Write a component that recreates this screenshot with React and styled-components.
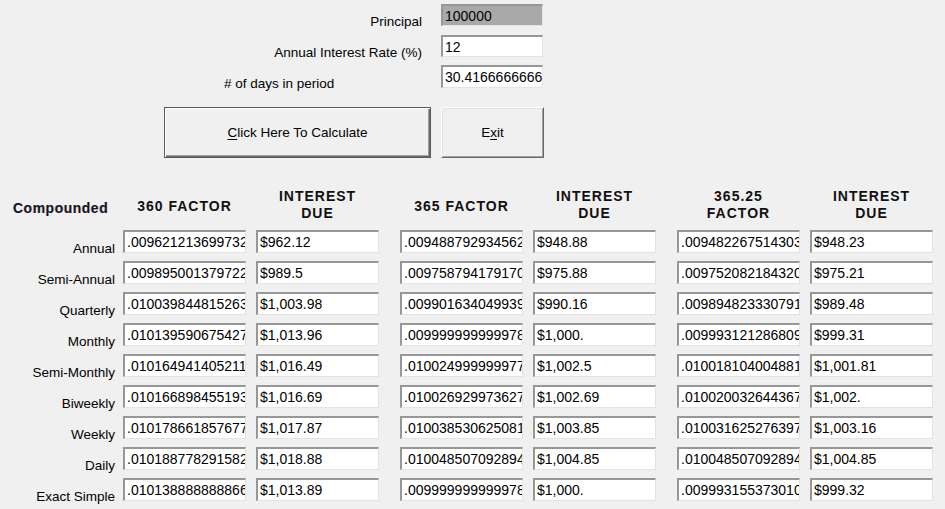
import React from 'react'
import styled, { createGlobalStyle } from 'styled-components'

const Global = createGlobalStyle`
  html, body {
    margin: 0;
    padding: 0;
    background: #f0f0f0;
  }
  * {
    box-sizing: border-box;
  }
`

const Form = styled.div`
  width: 945px;
  height: 509px;
  background: #f0f0f0;
  font-family: "Liberation Sans", Arial, sans-serif;
  color: #000;
  padding-top: 4px;
  overflow: hidden;
`

const Inputs = styled.div`
  display: grid;
  grid-template-columns: 202px 102px;
  grid-template-rows: 22px 22px 23px;
  column-gap: 19px;
  row-gap: 8.5px;
  padding-left: 220px;
`

const TopLabel = styled.div`
  font-size: 13.5px;
  line-height: 15px;
  align-self: end;
  margin-bottom: -3px;
  padding-left: ${p => (p.left ? 4 : 0)}px;
  text-align: ${p => (p.left ? 'left' : 'right')};
  white-space: nowrap;
`

const Field = styled.div`
  width: ${p => p.w || 123}px;
  height: ${p => p.h || 23}px;
  background: ${p => (p.disabled ? '#a9a9a9' : '#fff')};
  border-style: solid;
  border-width: 2px 1px 1px 2px;
  border-color: #979797 #e3e3e3 #e3e3e3 #979797;
  font-size: 14px;
  line-height: 18px;
  padding: 1px 0 0 2px;
  white-space: nowrap;
  overflow: hidden;
  justify-self: start;
`

const Buttons = styled.div`
  display: flex;
  gap: 10px;
  padding-left: 164px;
  margin-top: 19px;
`

const Button = styled.div`
  width: ${p => p.w}px;
  height: 51px;
  background: #f0f0f0;
  display: flex;
  align-items: center;
  justify-content: center;
  font-size: 13.5px;
  border: 1px solid;
  border-color: ${p => (p.primary ? '#5a5a5a' : '#ffffff #696969 #696969 #ffffff')};
  box-shadow: ${p =>
    p.primary
      ? 'inset 1px 1px 0 #ffffff, inset -1px -1px 0 #696969, inset -2px -2px 0 #a0a0a0'
      : 'inset 1px 1px 0 #e3e3e3, inset -1px -1px 0 #a0a0a0'};

  u {
    text-decoration: underline;
    text-underline-offset: 2px;
  }
`

const Table = styled.div`
  display: grid;
  grid-template-columns: 123px 133px 144px 133px 144px 133px 123px;
  grid-template-rows: 34px;
  grid-auto-rows: 23px;
  row-gap: 8px;
  margin-top: 30px;
`

const HeadRow = styled.div`
  display: contents;
`

const Compounded = styled.div`
  align-self: center;
  padding-left: 13px;
  padding-top: 6px;
  font-size: 14px;
  font-weight: 700;
  color: #0d1634;
  letter-spacing: 0.5px;
  text-shadow: -0.6px 0 0 rgba(210, 130, 40, 0.55);
  white-space: nowrap;
`

const Head = styled.div`
  width: 123px;
  align-self: center;
  text-align: center;
  font-size: 14px;
  line-height: 17px;
  font-weight: 700;
  letter-spacing: 1px;
  color: #111;
  padding-top: ${p => (p.single ? 3 : 0)}px;
`

const RowLabel = styled.div`
  align-self: end;
  margin-bottom: -4px;
  padding-right: 8px;
  text-align: right;
  font-size: 13.5px;
  line-height: 16px;
  white-space: nowrap;
`

const rows = [
  ['Annual', '.009621213699732', '$962.12', '.009488792934562', '$948.88', '.009482267514303', '$948.23'],
  ['Semi-Annual', '.009895001379722', '$989.5', '.009758794179170', '$975.88', '.009752082184320', '$975.21'],
  ['Quarterly', '.010039844815263', '$1,003.98', '.009901634049939', '$990.16', '.009894823330791', '$989.48'],
  ['Monthly', '.010139590675427', '$1,013.96', '.009999999999978', '$1,000.', '.009993121286809', '$999.31'],
  ['Semi-Monthly', '.010164941405211', '$1,016.49', '.010024999999977', '$1,002.5', '.010018104004881', '$1,001.81'],
  ['Biweekly', '.010166898455193', '$1,016.69', '.010026929973627', '$1,002.69', '.010020032644367', '$1,002.'],
  ['Weekly', '.010178661857677', '$1,017.87', '.010038530625081', '$1,003.85', '.010031625276397', '$1,003.16'],
  ['Daily', '.010188778291582', '$1,018.88', '.010048507092894', '$1,004.85', '.010048507092894', '$1,004.85'],
  ['Exact Simple', '.010138888888866', '$1,013.89', '.009999999999978', '$1,000.', '.009993155373010', '$999.32'],
]

const App = () => {
  return (
    <Form>
      <Global />
      <Inputs>
        <TopLabel>Principal</TopLabel>
        <Field w={102} h={22} disabled>100000</Field>
        <TopLabel>Annual Interest Rate (%)</TopLabel>
        <Field w={102} h={22}>12</Field>
        <TopLabel left># of days in period</TopLabel>
        <Field w={102} h={23}>30.4166666666</Field>
      </Inputs>

      <Buttons>
        <Button w={267} primary>
          <span><u>C</u>lick Here To Calculate</span>
        </Button>
        <Button w={103}>
          <span>E<u>x</u>it</span>
        </Button>
      </Buttons>

      <Table>
        <HeadRow>
          <Compounded>Compounded</Compounded>
          <Head single>360 FACTOR</Head>
          <Head>INTEREST<br />DUE</Head>
          <Head single>365 FACTOR</Head>
          <Head>INTEREST<br />DUE</Head>
          <Head>365.25<br />FACTOR</Head>
          <Head>INTEREST<br />DUE</Head>
        </HeadRow>
        {rows.map(r => (
          <React.Fragment key={r[0]}>
            <RowLabel>{r[0]}</RowLabel>
            {r.slice(1).map((v, i) => (
              <Field key={i}>{v}</Field>
            ))}
          </React.Fragment>
        ))}
      </Table>
    </Form>
  )
}

export default App
